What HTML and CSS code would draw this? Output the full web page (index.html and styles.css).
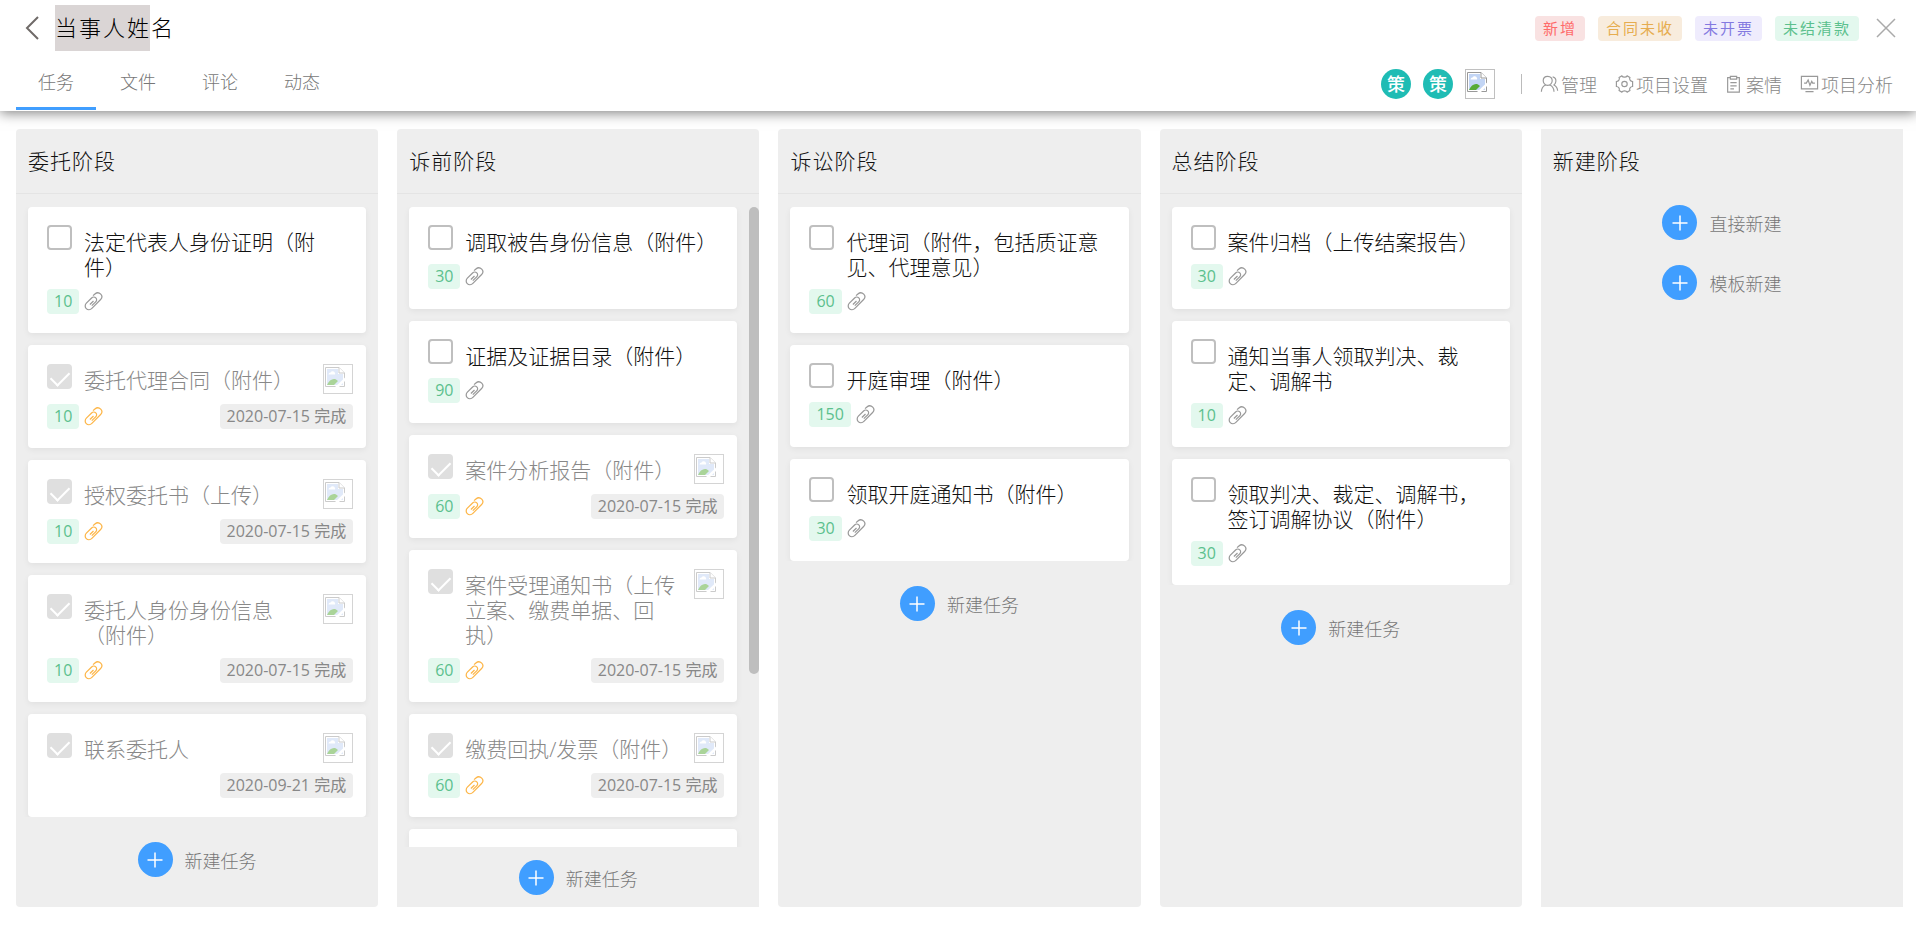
FILE: index.html
```
<!DOCTYPE html>
<html lang="zh-CN">
<head>
<meta charset="utf-8">
<title>当事人姓名</title>
<link rel="stylesheet" href="styles.css">
</head>
<body>
<svg class="defs" aria-hidden="true">
  <symbol id="clip" viewBox="0 0 20 20"><path d="M9.500 3.800 L11.500 2.100 C13.400.5 16 .7 17.600 2.300 C19.200 4 19.100 6.300 17.500 7.900 L8.300 17.200 C6.600 18.900 4 19 2.400 17.500 C.8 16 .9 13.300 2.500 11.700 L8 6.300 C9.300 5 11.200 5 12.400 6.200 C13.600 7.400 13.500 9.200 12.300 10.400 L8.200 14.400 M6.200 13.200 L10 9.500"/></symbol>
  <symbol id="plus" viewBox="0 0 16 16"><path d="M8 0.500V15.500M0.500 8H15.500"/></symbol>
  <symbol id="broken" viewBox="0 0 20 20">
    <path d="M.5.5H14L19.500 6V19.500H.5Z" fill="#fff" stroke="#999"/>
    <path d="M2 2H13V7H18V18H2Z" fill="#c2d5f5"/>
    <path d="M3.500 7.500a2 2 0 0 1 2-2 2.500 2.500 0 0 1 4.500.5 1.500 1.500 0 0 1 0 1.500Z" fill="#fff"/>
    <path d="M2 18C4 13 8 11 11 12.500L13 14 9 18Z" fill="#57ab36"/>
    <path d="M14 .5V6H19.500" fill="#fff" stroke="#999"/>
    <path d="M10 20L20 10.500V14L14 20Z" fill="#fff"/>
  </symbol>
</svg>
<header class="top">
  <div class="title-row">
    <button class="plain" aria-label="返回"><svg class="back" viewBox="0 0 14 24"><path d="M13 1L2 12L13 23"/></svg></button>
    <h1 class="name">当事人姓名</h1>
    <div class="tags">
      <span class="tag red">新增</span>
      <span class="tag amber">合同未收</span>
      <span class="tag violet">未开票</span>
      <span class="tag green">未结清款</span>
      <button class="plain" aria-label="关闭"><svg class="close" viewBox="0 0 20 20"><path d="M1 1L19 19M19 1L1 19"/></svg></button>
    </div>
  </div>
  <div class="nav-row">
    <nav class="tabs">
      <a class="tab active" href="#">任务</a>
      <a class="tab" href="#">文件</a>
      <a class="tab" href="#">评论</a>
      <a class="tab" href="#">动态</a>
    </nav>
    <div class="tools">
      <span class="avatar">策</span>
      <span class="avatar">策</span>
      <span class="photo"><svg><use href="#broken"/></svg></span>
      <span class="divider"></span>
      <button class="plain tool"><svg viewBox="0 0 20 20"><path d="M8 1.500C4.500 1.500 3 4 3 6.500S5 11.500 8 11.500 13 9 13 6.500 11.500 1.500 8 1.500M5.500 11C2.500 12.500 1 15 1 18.500M10.500 11C13.500 12.500 15 15 15 18.500M13.500 2C16.500 2.500 17.500 5 17 7.500 16.800 9 16 10.200 15 11C17.500 12.500 19 14.500 19 17.500"/></svg>管理</button>
      <button class="plain tool"><svg viewBox="0 0 20 20"><path d="M7 1C8 2.800 12 2.800 13 1L16 2.800C15 4.800 16.500 7 19 7.200V12.800C16.500 13 15 15.200 16 17.200L13 19C12 17.200 8 17.200 7 19L4 17.200C5 15.200 3.500 13 1 12.800V7.200C3.500 7 5 4.800 4 2.800Z"/><circle cx="10" cy="10" r="3"/></svg>项目设置</button>
      <button class="plain tool"><svg class="narrow" viewBox="0 0 15 20"><path d="M4 3H1V19H14V3H11M4 1.500H11V4.500H4ZM4 8.500H11M4 12H11M4 15.500H8"/></svg>案情</button>
      <button class="plain tool"><svg viewBox="0 0 20 20"><path d="M1 1.500H19V15.500H1ZM5.500 18.500H14.500M4 9H6.500L8.500 5.500 10.500 11.500 12.500 7 13.500 9H16"/></svg>项目分析</button>
    </div>
  </div>
</header>
<main class="board" id="board"></main>
<script src="board.js"></script>
</body>
</html>
```
FILE: styles.css
```
* { box-sizing: border-box; }
html, body { height: 100%; }
body {
  margin: 0;
  display: flex;
  flex-direction: column;
  background: #fff;
  color: #111;
  font-family: "Open Sans", "Noto Sans CJK SC", sans-serif;
  font-weight: 300;
}
svg { fill: none; display: block; flex: none; }
.defs { position: absolute; width: 0; height: 0; }
.plain { border: 0; padding: 0; background: none; font: inherit; color: inherit; cursor: pointer; }

.top { flex: none; position: relative; padding: 5px 20px 0 16px; box-shadow: 0 2px 12px rgba(0, 0, 0, .5); }
.title-row { display: flex; align-items: center; height: 46px; }
.back { width: 14px; height: 24px; margin: 0 16px 0 9px; stroke: #6f6a68; stroke-width: 2; }
.name {
  width: 95px;
  height: 46px;
  margin: 0;
  background: #dad5d5;
  font-size: 22px;
  font-weight: 300;
  line-height: 44px;
  letter-spacing: 2px;
  white-space: nowrap;
  color: #000;
}
.tags { margin-left: auto; display: flex; align-items: center; gap: 13px; }
.tag { padding: 0 8px; border-radius: 4px; font-size: 15px; line-height: 25px; letter-spacing: 2px; font-weight: 400; }
.red { background: #f9e2e2; color: #ff6b6b; }
.amber { background: #f8ecdd; color: #e6ac4f; }
.violet { background: #efecfd; color: #8379e0; }
.green { background: #e3f8ee; color: #5bc08d; }
.close { width: 20px; height: 20px; margin-left: 4px; stroke: #aaa; stroke-width: 1.5; }

.nav-row { display: flex; justify-content: space-between; height: 60px; }
.tabs { display: flex; gap: 2px; }
.tab { height: 59px; padding: 0 22px; font-size: 18px; line-height: 62px; color: #777; text-decoration: none; }
.tab.active { border-bottom: 3px solid #409eff; }
.tools { display: flex; align-items: center; height: 66px; margin-right: 3px; font-size: 18px; color: #888; }
.avatar { width: 30px; height: 30px; margin-right: 12px; border-radius: 50%; background: #1fbcb4; color: #fff; font-weight: 500; line-height: 30px; text-align: center; }
.photo { flex: none; width: 30px; height: 30px; padding: 2px 1px; border: 1px solid #c0c0c0; }
.photo svg { width: 20px; height: 20px; }
.divider { width: 1px; height: 20px; margin-left: 26px; background: #bbb; }
.tool { display: flex; align-items: center; gap: 2px; margin-left: 18px; }
.tool svg { width: 19px; height: 18px; stroke: #999; stroke-width: 1.300; }
.tool svg.narrow { width: 15px; margin-right: 3px; }

.board { flex: 1; min-height: 0; display: grid; grid-template-columns: repeat(5, minmax(0, 1fr)); gap: 19px; padding: 18px 13px 19px 16px; }
.column { position: relative; display: flex; flex-direction: column; min-height: 0; background: #eee; border-radius: 4px; }
.column.overflowing { border-radius: 4px 4px 0 0; }
.column.create { border-radius: 0; }
.column h2 { flex: none; height: 65px; margin: 0; padding: 0 12px; border-bottom: 1px solid #e4e4e4; font-size: 21px; font-weight: 300; line-height: 64px; letter-spacing: 1px; }
.create h2 { border-bottom-color: transparent; }
.list { display: flex; flex-direction: column; gap: 12px; margin-top: 13px; padding: 0 12px; overflow: hidden; }
.list > * { flex: none; }
.overflowing .list { flex: 1; min-height: 0; padding-right: 22px; }
.thumb { position: absolute; top: 78px; right: 0; width: 10px; height: 60%; border-radius: 5px; background: #bebebe; }

.card { min-height: 102px; padding: 18px 13px 19px 19px; border-radius: 4px; background: #fff; box-shadow: 0 2px 6px rgba(0, 0, 0, .06); }
.card.done { padding-top: 19px; color: #888; }
.card-head { display: flex; align-items: flex-start; }
.check { appearance: none; flex: none; width: 25px; height: 25px; margin: 0 12px 0 0; border: 2px solid #bfbfbf; border-radius: 4px; background: #fff; }
.check:checked { display: grid; place-items: center; border: 0; background: #dfdfdf; }
.check:checked::after { content: ""; width: 16px; height: 9px; border: solid #fff; border-width: 0 0 2px 2px; transform: rotate(-45deg); }
.text { flex: 1; min-height: 30px; padding: 5px 8px 0 0; font-size: 21px; line-height: 25px; cursor: pointer; }
.done .text { padding: 4px 0 0; }
.done .photo { margin-left: 10px; opacity: .5; border-color: #aaa; }
.card-foot { display: flex; align-items: center; height: 25px; margin-top: 9px; }
.done .card-foot { margin-top: 10px; }
.score { padding: 0 7px; border-radius: 4px; font-size: 16px; line-height: 25px; font-weight: 400; }
.clip { width: 19px; height: 19px; margin-left: 5px; stroke: #999; stroke-width: 1.300; }
.done .clip { stroke: #fdb648; }
.date { margin-left: auto; padding: 0 7px; border-radius: 4px; background: #eee; color: #888; font-size: 16px; line-height: 25px; font-weight: 400; }

.add { flex: none; display: flex; align-items: center; justify-content: center; gap: 12px; width: 100%; margin-top: 25px; font-size: 18px; color: #777; }
.overflowing .add { margin: 13px 0 12px; }
.create h2 + .add { margin-top: 11px; }
.disc { display: grid; place-items: center; width: 35px; height: 35px; border-radius: 50%; background: #409eff; }
.disc svg { width: 16px; height: 16px; stroke: #fff; stroke-width: 1.500; }
```
FILE: board.js
```
const D = "2020-07-15 完成";
const columns = [
  { name: "委托阶段", add: ["新建任务"], cards: [
    ["法定代表人身份证明（附件）", 10],
    ["委托代理合同（附件）", 10, D],
    ["授权委托书（上传）", 10, D],
    ["委托人身份身份信息（附件）", 10, D],
    ["联系委托人", 0, "2020-09-21 完成"]] },
  { name: "诉前阶段", kind: "overflowing", add: ["新建任务"], cards: [
    ["调取被告身份信息（附件）", 30],
    ["证据及证据目录（附件）", 90],
    ["案件分析报告（附件）", 60, D],
    ["案件受理通知书（上传立案、缴费单据、回执）", 60, D],
    ["缴费回执/发票（附件）", 60, D],
    null] },
  { name: "诉讼阶段", add: ["新建任务"], cards: [
    ["代理词（附件，包括质证意见、代理意见）", 60],
    ["开庭审理（附件）", 150],
    ["领取开庭通知书（附件）", 30]] },
  { name: "总结阶段", add: ["新建任务"], cards: [
    ["案件归档（上传结案报告）", 30],
    ["通知当事人领取判决、裁定、调解书", 10],
    ["领取判决、裁定、调解书，签订调解协议（附件）", 30]] },
  { name: "新建阶段", kind: "create", add: ["直接新建", "模板新建"], cards: [] }
];

let n = 0;
function card(c) {
  if (!c) return '<article class="card"></article>';
  const [text, score, date] = c;
  const id = "task" + (++n);
  return `<article class="card${date ? " done" : ""}">
    <div class="card-head">
      <input class="check" type="checkbox" id="${id}"${date ? " checked" : ""}>
      <label class="text" for="${id}">${text}</label>
      ${date ? '<span class="photo"><svg><use href="#broken"/></svg></span>' : ""}
    </div>
    <div class="card-foot">
      ${score ? `<span class="score green">${score}</span><svg class="clip"><use href="#clip"/></svg>` : ""}
      ${date ? `<span class="date">${date}</span>` : ""}
    </div>
  </article>`;
}
document.getElementById("board").innerHTML = columns.map(col => `
  <section class="column ${col.kind || ""}">
    <h2>${col.name}</h2>
    ${col.cards.length ? `<div class="list">${col.cards.map(card).join("")}</div>` : ""}
    ${col.kind === "overflowing" ? '<div class="thumb"></div>' : ""}
    ${col.add.map(a => `<button class="plain add"><span class="disc"><svg><use href="#plus"/></svg></span>${a}</button>`).join("")}
  </section>`).join("");
```
